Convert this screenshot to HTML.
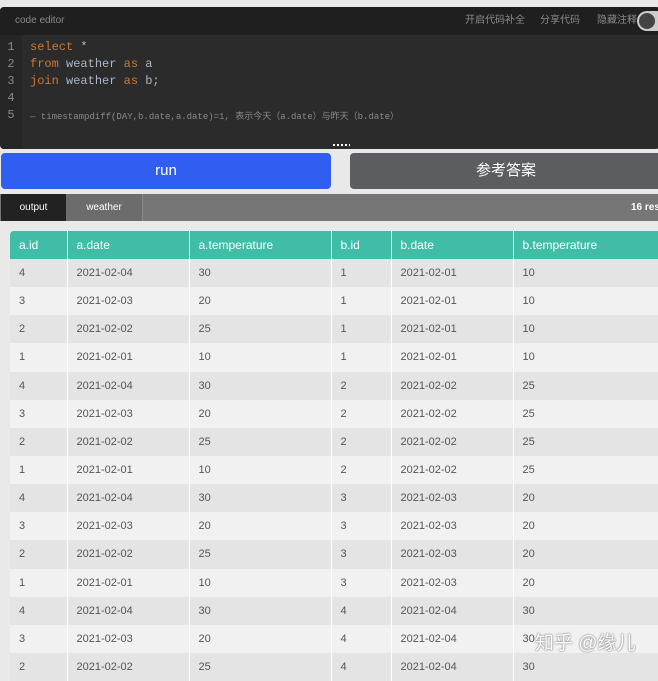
<!DOCTYPE html>
<html><head><meta charset="utf-8"><style>
*{margin:0;padding:0;box-sizing:border-box}
body{width:658px;height:672px;overflow:hidden;background:#e9e9e9;font-family:"Liberation Sans","Noto Sans CJK SC",sans-serif;position:relative}
.ed{position:absolute;left:0;top:7px;width:660px;height:142px;background:#2b2b2b;border-radius:4px;overflow:hidden}
.hd{height:28px;background:#1f1f1f;color:#8a8a8a;font-size:10px;line-height:28px;padding-left:15px;position:relative}
.hd .r{position:absolute;top:0;font-size:10px}
.tog{position:absolute;left:637px;top:4px;width:30px;height:20px;border-radius:10px;background:#ccc}
.tog i{position:absolute;left:2px;top:2px;width:16px;height:16px;border-radius:8px;background:#444}
.gut{position:absolute;left:0;top:28px;width:22px;bottom:0;background:#262626}
.ln{position:absolute;left:0;width:22px;text-align:center;color:#888;font:12px "Liberation Mono",monospace}
.cd{position:absolute;left:30px;font:12px "Liberation Mono",monospace;color:#a9b7c6;white-space:pre}
.k{color:#cc7832}
.cm{font-size:9px;color:#8a8a8a}
.dots{position:absolute;left:333px;top:144px;width:17px;height:2px;background:repeating-linear-gradient(90deg,#fff 0 2px,transparent 2px 4px)}
.btn{position:absolute;top:153px;height:36px;border-radius:4px;color:#fff;font-size:15px;text-align:center;line-height:36px}
.tabs{position:absolute;left:0;top:194px;width:658px;height:27px;background:#767676;font-size:10px;color:#fff;line-height:28px}
.tab{position:absolute;top:0;height:27px;text-align:center}
table{position:absolute;left:10px;top:231px;border-collapse:collapse;width:660px;font-size:11px;table-layout:fixed}
th{background:#3fbda6;color:#fff;font-weight:normal;text-align:left;height:28px;padding-left:9px;border-right:1px solid #fff;font-size:12px}
td{height:28.15px;padding-left:9px;color:#555;border-right:1px solid #fff}
tr:nth-child(odd) td{background:#f1f1f1}
tr:nth-child(even) td{background:#e4e4e4}
.wm{position:absolute;left:535px;top:628px;color:#fff;font-size:19px;text-shadow:0 0 2px #888,0 0 1px #666}
</style></head><body>
<div class="ed">
<div class="hd">code editor
<span class="r" style="left:465px">开启代码补全</span>
<span class="r" style="left:540px">分享代码</span>
<span class="r" style="left:597px">隐藏注释</span>
<div class="tog"><i></i></div></div>
<div class="gut"></div>
<div class="ln" style="top:33px">1</div><div class="ln" style="top:50px">2</div><div class="ln" style="top:67px">3</div><div class="ln" style="top:84px">4</div><div class="ln" style="top:101px">5</div>
<div class="cd" style="top:33px"><span class="k">select</span> *</div>
<div class="cd" style="top:50px"><span class="k">from</span> weather <span class="k">as</span> a</div>
<div class="cd" style="top:67px"><span class="k">join</span> weather <span class="k">as</span> b;</div>
<div class="cd cm" style="top:102px">— timestampdiff(DAY,b.date,a.date)=1, 表示今天（a.date）与昨天（b.date）</div>
</div>
<div class="dots"></div>
<div class="btn" style="left:1px;width:330px;background:#305ef0">run</div>
<div class="btn" style="left:350px;width:312px;background:#5b5d61">参考答案</div>
<div class="tabs">
<div class="tab" style="left:1px;width:65px;background:#222">output</div>
<div class="tab" style="left:66px;width:77px;background:#6c6c6c;border-right:1px solid #888">weather</div>
<div style="position:absolute;left:631px;top:0;font-weight:bold;white-space:nowrap">16 res</div>
</div>
<table>
<colgroup><col style="width:57px"><col style="width:122px"><col style="width:142px"><col style="width:60px"><col style="width:122px"><col></colgroup>
<tr><th style="border-radius:4px 0 0 0">a.id</th><th>a.date</th><th>a.temperature</th><th>b.id</th><th>b.date</th><th>b.temperature</th></tr>
<tr><td>4</td><td>2021-02-04</td><td>30</td><td>1</td><td>2021-02-01</td><td>10</td></tr>
<tr><td>3</td><td>2021-02-03</td><td>20</td><td>1</td><td>2021-02-01</td><td>10</td></tr>
<tr><td>2</td><td>2021-02-02</td><td>25</td><td>1</td><td>2021-02-01</td><td>10</td></tr>
<tr><td>1</td><td>2021-02-01</td><td>10</td><td>1</td><td>2021-02-01</td><td>10</td></tr>
<tr><td>4</td><td>2021-02-04</td><td>30</td><td>2</td><td>2021-02-02</td><td>25</td></tr>
<tr><td>3</td><td>2021-02-03</td><td>20</td><td>2</td><td>2021-02-02</td><td>25</td></tr>
<tr><td>2</td><td>2021-02-02</td><td>25</td><td>2</td><td>2021-02-02</td><td>25</td></tr>
<tr><td>1</td><td>2021-02-01</td><td>10</td><td>2</td><td>2021-02-02</td><td>25</td></tr>
<tr><td>4</td><td>2021-02-04</td><td>30</td><td>3</td><td>2021-02-03</td><td>20</td></tr>
<tr><td>3</td><td>2021-02-03</td><td>20</td><td>3</td><td>2021-02-03</td><td>20</td></tr>
<tr><td>2</td><td>2021-02-02</td><td>25</td><td>3</td><td>2021-02-03</td><td>20</td></tr>
<tr><td>1</td><td>2021-02-01</td><td>10</td><td>3</td><td>2021-02-03</td><td>20</td></tr>
<tr><td>4</td><td>2021-02-04</td><td>30</td><td>4</td><td>2021-02-04</td><td>30</td></tr>
<tr><td>3</td><td>2021-02-03</td><td>20</td><td>4</td><td>2021-02-04</td><td>30</td></tr>
<tr><td>2</td><td>2021-02-02</td><td>25</td><td>4</td><td>2021-02-04</td><td>30</td></tr>
</table>
<div class="wm">知乎 @缘儿</div>
</body></html>
